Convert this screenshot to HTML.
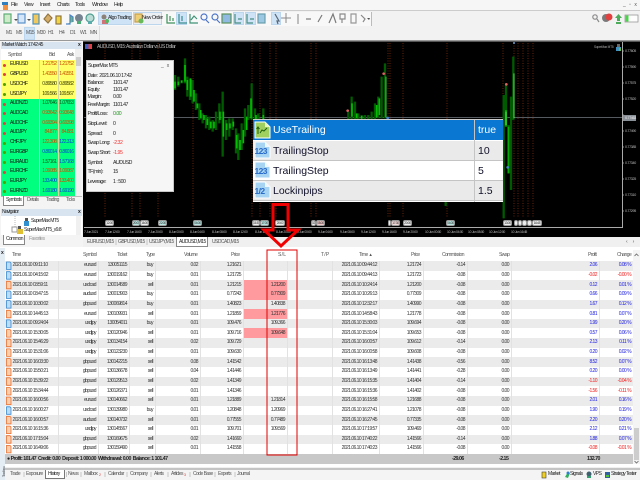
<!DOCTYPE html>
<html><head><meta charset="utf-8"><style>
html,body{margin:0;padding:0;width:640px;height:480px;overflow:hidden;background:#f0f0f0}
body{position:relative;font-family:"Liberation Sans",sans-serif;font-size:5px;color:#222;letter-spacing:-.55px}
.a{position:absolute}
.t{position:absolute;white-space:nowrap;line-height:7px;height:7px}
.s{font-size:5.2px;letter-spacing:-.5px}
.g{color:#555}
table{border-collapse:collapse;table-layout:fixed;position:absolute}
.b{color:#2020e0!important}.r{color:#f02020!important}
#mw td{height:9.73px;padding:0 1px 0 0;text-align:right;white-space:nowrap;font-size:5px;line-height:7px;box-sizing:border-box;border-right:1px solid #d8d8a0}
#mw td:first-child{text-align:left;padding-left:9px;color:#111}
.y td{background:#ffff66}.n td{background:#00ff7f}
.o{color:#c85000}.d{color:#3a3e00}.e{color:#005c18}.u{color:#0048d0}
.k{position:absolute;width:3px;height:3px;border-radius:50%;left:3px}
.ku{background:#e04040}.kd{background:#50a000}
.btn{position:absolute;background:#cfe3f6;border:1px solid #bcd6ee;box-sizing:border-box}
.pr{position:absolute;left:625px;font-size:3.6px;letter-spacing:-.3px;color:#bbb;line-height:5px;white-space:nowrap}
.tm{position:absolute;top:229px;font-size:3.4px;color:#bbb;line-height:6px;white-space:nowrap;letter-spacing:-.3px}
.lb{position:absolute;top:219.5px;height:6px;background:#eee;border:1px solid #999;border-radius:2px;box-sizing:border-box;font-size:3.2px;line-height:4px;color:#222;text-align:center;letter-spacing:-.3px;overflow:hidden}
.big{position:absolute;font-size:10.5px;line-height:20px;height:20px;color:#10102a;letter-spacing:0;white-space:nowrap}
.ic{position:absolute;left:254.5px;font-size:8.5px;font-weight:bold;color:#2a6cc8;letter-spacing:-.6px;line-height:10px;height:10px;white-space:nowrap}
#r{left:5px;top:261px;width:628px}
#r td{height:9.65px;padding:0 1.5px 0 0;text-align:right;white-space:nowrap;overflow:hidden;line-height:7px;font-size:5px;color:#333;border-right:1px solid #e2e2e2;box-sizing:border-box;background:#ebebeb}
#r tr:nth-child(even) td{background:#fff}
#r td.l{text-align:left;padding-left:7.5px}
#r td.p{background:#ff9a9e!important}
</style></head><body>

<!-- menu -->
<div class="a" style="left:0;top:0;width:640px;height:10px;background:#f6f6f6"></div>
<svg class="a" style="left:2px;top:1px" width="7" height="9"><rect x="0" y="1" width="6" height="3" fill="#3080c0"/><rect x="1" y="4" width="5" height="5" fill="#f09040"/></svg>
<span class="t s" style="left:11px;top:2px">File</span><span class="t s" style="left:24px;top:2px">View</span><span class="t s" style="left:40px;top:2px">Insert</span><span class="t s" style="left:57px;top:2px">Charts</span><span class="t s" style="left:75px;top:2px">Tools</span><span class="t s" style="left:92px;top:2px">Window</span><span class="t s" style="left:114px;top:2px">Help</span>
<span class="t g" style="left:623px;top:2px;letter-spacing:1px">_ ▫ x</span>

<!-- toolbar -->
<div class="a" style="left:0;top:10px;width:640px;height:1px;background:#ccc"></div>
<div class="a" style="left:0;top:11px;width:640px;height:15px;background:#f2f2f2"></div>
<div class="a" style="left:2px;top:12px;width:369px;height:14px;background:#f8f8f8;border-right:1px solid #bbb"></div>
<div class="btn" style="left:98px;top:12px;width:34px;height:13px"></div>
<div class="btn" style="left:133px;top:12px;width:29px;height:13px;background:#ecf0f4"></div>
<div class="btn" style="left:176px;top:12px;width:11px;height:13px"></div>
<div class="btn" style="left:233px;top:12px;width:11px;height:13px"></div>
<div class="btn" style="left:245px;top:12px;width:11px;height:13px"></div>
<div class="btn" style="left:271px;top:12px;width:10px;height:13px"></div>
<svg class="a" style="left:0;top:10px;opacity:.85" width="640" height="18" fill="none">
<g stroke-width="1.2">
<rect x="4" y="4" width="7" height="9" fill="#c8e8c0" stroke="#40a060"/><path d="M14 9l2 2 2-2z" fill="#333"/>
<rect x="18" y="4" width="7" height="9" fill="#d0e4f8" stroke="#4080c0"/><path d="M27 9l2 2 2-2z" fill="#333"/>
<rect x="33" y="4" width="6" height="10" fill="#f0c040" stroke="#3080b0"/>
<path d="M44 9l4-5 4 4-4 5z" fill="#d0a050" stroke="#806020"/>
<rect x="56" y="6" width="5" height="8" fill="#f0d020" stroke="#806020"/>
<path d="M66 14h4V5l3 2v5" fill="#50b050" stroke="#3070c0"/>
<circle cx="79" cy="8" r="4" fill="#607080"/><rect x="77" y="11" width="4" height="3" fill="#30a060"/>
<circle cx="90" cy="8" r="4" fill="#b0d8d0" stroke="#309080"/><rect x="88" y="11" width="4" height="3" fill="#40a0a0"/>
<circle cx="104" cy="7" r="2.5" fill="#807060"/><path d="M102 10h6v4h-6z" fill="#d06060"/><circle cx="107" cy="11" r="2" fill="#40b040"/>
<rect x="135" y="4" width="7" height="8" fill="#f0c860" stroke="#c09030"/><circle cx="141" cy="11" r="2.5" fill="#50b040"/>
<path d="M167 4v9h8M170 6v5M173 8v3" stroke="#208040"/><path d="M179 4v9h8M182 6v5" stroke="#208080"/><path d="M190 4v9h8M191 10l3-4 3 3" stroke="#208060"/>
<circle cx="204" cy="7" r="3" stroke="#3060c0"/><path d="M206 10l3 3" stroke="#3060c0"/><circle cx="215" cy="7" r="3" stroke="#3060c0"/><path d="M217 10l3 3" stroke="#3060c0"/>
<rect x="222" y="4" width="9" height="9" fill="#80b0e0" stroke="#408040"/>
<path d="M235 4v9h6M238 9h4" stroke="#308070"/><path d="M247 4v9h6M250 9h4" stroke="#308070"/>
<rect x="258" y="4" width="7" height="9" fill="#8cc0e0" stroke="#5090a0"/>
<path d="M275 4l4 7-2 0 1 3" stroke="#405060"/><path d="M286 3v10M281 8h10" stroke="#777" stroke-width="1"/>
<path d="M298 4v10" stroke="#888"/><path d="M306 9h5" stroke="#666"/><path d="M318 12l4-7" stroke="#666"/>
<path d="M329 13l4-9 3 9" stroke="#666"/><path d="M340 4h5v5h-5zM342 9v4" stroke="#777"/><path d="M351 4h5v9h-5z" stroke="#888"/><path d="M361 5l4 4-2 3" stroke="#777"/><path d="M367 8l2 2 1-2z" fill="#333"/>
<circle cx="595" cy="7" r="2.2" stroke="#777"/><path d="M597 9l2 3" stroke="#777"/>
<circle cx="606" cy="8" r="4" fill="#666"/><circle cx="609" cy="7" r="3.5" fill="#e02020"/>
<path d="M615 8l3.500-4 3.500 4h-2v3h-3v-3z" fill="#30a040"/><rect x="616" y="12" width="5" height="2" fill="#30a040"/>
<rect x="625" y="5" width="13" height="7" fill="#fff" stroke="#888" stroke-width=".8"/><rect x="625.500" y="5.500" width="3" height="6" fill="#30d030"/>
</g></svg>
<span class="t s" style="left:108px;top:15px;color:#222">Algo Trading</span>
<span class="t s" style="left:142px;top:15px;color:#222">New Order</span>

<div class="a" style="left:0;top:26px;width:640px;height:15px;background:#f2f2f2"></div>
<div class="a" style="left:99px;top:26px;width:1px;height:15px;background:#ddd"></div>
<div class="btn" style="left:24px;top:27px;width:11px;height:13px"></div>
<span class="t g" style="left:6px;top:30px">M1</span><span class="t g" style="left:16px;top:30px">M5</span><span class="t g" style="left:26px;top:30px">M15</span><span class="t g" style="left:37px;top:30px">M30</span><span class="t g" style="left:48px;top:30px">H1</span><span class="t g" style="left:59px;top:30px">H4</span><span class="t g" style="left:70px;top:30px">D1</span><span class="t g" style="left:80px;top:30px">W1</span><span class="t g" style="left:90px;top:30px">MN</span>
<div class="a" style="left:0;top:40px;width:640px;height:1px;background:#999"></div>

<!-- chart -->
<div class="a" style="left:83px;top:41px;width:557px;height:196px;background:#000;border-top:1px solid #555;box-sizing:border-box"></div>
<div class="a" style="left:85px;top:44px;width:7px;height:5px;background:linear-gradient(90deg,#4060c0 50%,#e04040 50%)"></div>
<span class="t" style="left:97px;top:44px;color:#bbb">AUDUSD, M15: Australian Dollar vs US Dollar</span>
<svg class="a" style="left:0;top:0" width="640" height="240" fill="none">
<g stroke="#6a2408" stroke-width="1" stroke-dasharray="1 1.500">
<path d="M105 43V218M132 43V218M140 43V218M158 43V218M193 43V218M252 43V218M260 43V218M270 43V218M276 43V218M311 43V218M316 43V218M388 43V218M390 43V218M403 43V218M447 43V218M503 43V218M514 43V218M518 43V218M523 43V218M528 43V218M533 43V218"/>
</g>
<path d="M84 117.500H622" stroke="#555a60" stroke-width="1"/>
<g transform="translate(170,40) scale(.33333)">
<path stroke="#005a00" stroke-width="7" d="M15 105V150M25 110V140M35 120V130M45 55V130M52 110V170M60 115V180M68 120V190M78 160V210M88 190V240M98 220V250M108 225V265M118 230V270M128 240V275M138 215V270M148 190V250M158 155V350M168 240V300M178 235V290M188 235V270M198 265V340M205 280V360M215 250V330M225 205V290M235 195V240M245 130V240M255 205V240M265 220V240M280 205V240M535 215V238M545 170V238M555 185V238M565 220V238M575 225V238M585 225V238M595 225V238M605 215V238M615 190V238M625 170V235M635 110V235M645 70V235"/>
<path stroke="#00c000" stroke-width="5" d="M15 125V145M25 125V135M35 122V128M45 75V125M52 120V150M62 115V170M72 150V185M82 190V205M92 210V235M102 225V240M112 235V255M122 245V265M132 245V265M150 215V240M160 215V290M170 250V270M180 250V265M190 245V260M200 285V325M210 300V330M220 270V310M230 230V270M243 175V235M258 225V238M280 225V238M546 190V230M560 220V235M575 228V236M620 195V232M628 175V225"/>
<path stroke="#55ee55" stroke-width="2.500" d="M648 110V232"/>
<circle cx="641" cy="101" r="4" fill="#e06060"/><circle cx="533" cy="212" r="4" fill="#e06060"/><circle cx="653" cy="234" r="4" fill="#4080d0"/>
</g>
<g transform="translate(400,40) scale(.33333)">
<path stroke="#005a00" stroke-width="7" d="M137 485V498M311 165V535M318 130V260M326 255V400M333 170V450M340 50V240"/>
<path stroke="#00b000" stroke-width="5" d="M318 210V260M325 260V400"/>
<path stroke="#55ee55" stroke-width="3" d="M342 100V235M318 215V255"/>
<circle cx="319" cy="133" r="4" fill="#e06060"/><circle cx="323" cy="382" r="4" fill="#4080d0"/><circle cx="342" cy="9" r="3" fill="#70a0d0"/>
</g>
<path d="M84 227.500H622.500V42" stroke="#aaa" stroke-width="1"/>
<path d="M622 51h2M622 67h2M622 83h2M622 99h2M622 115h2M622 131h2M622 147h2M622 163h2M622 179h2M622 195h2M622 211h2" stroke="#aaa" stroke-width=".7"/>
</svg>
<span class="t" style="left:594px;top:44px;color:#aaa;font-size:3.2px;letter-spacing:-.2px">SuperMax MT5</span>
<svg class="a" style="left:616px;top:44px" width="6" height="8"><rect x="1" y="0" width="3" height="3" fill="#666"/><rect x="0" y="3" width="5" height="4" fill="#4090c0"/><rect x="3" y="4" width="2" height="3" fill="#60c040"/></svg>
<span class="pr" style="top:48.500px">0.77605</span><span class="pr" style="top:64.500px">0.77590</span><span class="pr" style="top:80.500px">0.77575</span><span class="pr" style="top:96.500px">0.77520</span><span class="pr" style="top:128.500px">0.77490</span><span class="pr" style="top:144.500px">0.77385</span><span class="pr" style="top:160.500px">0.77340</span><span class="pr" style="top:176.500px">0.77325</span><span class="pr" style="top:192.500px">0.77310</span><span class="pr" style="top:208.500px">0.77295</span>
<div class="a" style="left:623px;top:114.500px;width:13px;height:6px;background:#8a9098;font-size:3.6px;letter-spacing:-.3px;line-height:6px;color:#eee;text-align:right">0.77463</div>

<span class="tm" style="left:84px">7 Jun 2021</span><span class="tm" style="left:105px">7 Jun 12:00</span><span class="tm" style="left:127px">7 Jun 16:00</span><span class="tm" style="left:148px">7 Jun 20:00</span><span class="tm" style="left:169px">8 Jun 00:00</span><span class="tm" style="left:190px">8 Jun 04:00</span><span class="tm" style="left:212px">8 Jun 08:00</span><span class="tm" style="left:233px">8 Jun 12:00</span><span class="tm" style="left:255px">8 Jun 16:00</span><span class="tm" style="left:276px">8 Jun 20:00</span><span class="tm" style="left:297px">9 Jun 00:00</span><span class="tm" style="left:318px">9 Jun 04:00</span><span class="tm" style="left:340px">9 Jun 08:00</span><span class="tm" style="left:361px">9 Jun 12:00</span><span class="tm" style="left:382px">9 Jun 16:00</span><span class="tm" style="left:403px">9 Jun 20:00</span><span class="tm" style="left:425px">10 Jun 00:00</span><span class="tm" style="left:447px">10 Jun 04:00</span><span class="tm" style="left:468px">10 Jun 08:00</span><span class="tm" style="left:489px">10 Jun 12:00</span><span class="tm" style="left:511px">10 Jun 16:45</span>

<div class="lb" style="left:105px;width:9px">12:00</div><div class="lb" style="left:132px;width:8px;background:#b8e4e0">20:00</div><div class="lb" style="left:140px;width:9px">16:00</div><div class="lb" style="left:158px;width:9px;background:#b8e4e0">22:00</div><div class="lb" style="left:193px;width:9px;background:#b8e4e0">04:00</div><div class="lb" style="left:252px;width:8px">15:30</div><div class="lb" style="left:260px;width:9px;background:#b8e4e0">17:00</div><div class="lb" style="left:275px;width:10px">20:00</div><div class="lb" style="left:311px;width:5px">02</div><div class="lb" style="left:316px;width:9px;background:#f0c8c8">08:00</div><div class="lb" style="left:388px;width:3px"></div><div class="lb" style="left:391px;width:9px;background:#f0d8d8">17:30</div><div class="lb" style="left:403px;width:9px">20:00</div><div class="lb" style="left:446px;width:9px;background:#b8e4e0">04:00</div><div class="lb" style="left:503px;width:9px">13:00</div><div class="lb" style="left:514px;width:4px"></div><div class="lb" style="left:518px;width:4px"></div><div class="lb" style="left:522px;width:5px"></div><div class="lb" style="left:527px;width:5px"></div><div class="lb" style="left:532px;width:10px">16:45</div>

<!-- supermax panel -->
<div class="a" style="left:86px;top:60px;width:88px;height:132px;background:#f6f6f6;border:1px solid #c8c8c8;box-sizing:border-box"></div>
<span class="t s" style="left:88px;top:63px">SuperMax MT5</span><span class="t g" style="left:161px;top:63px;letter-spacing:3px">_x</span>
<span class="t s" style="left:87.500px;top:72.500px">Date:&nbsp; 2021.06.10 17:42</span>
<span class="t s" style="left:87.500px;top:79.500px">Balance:</span><span class="t s" style="left:113px;top:79.500px">1101.47</span>
<span class="t s" style="left:87.500px;top:87px">Equity:</span><span class="t s" style="left:113px;top:87px">1101.47</span>
<span class="t s" style="left:87.500px;top:94px">Margin:</span><span class="t s" style="left:113px;top:94px">0.00</span>
<span class="t s" style="left:87.500px;top:101.500px">FreeMargin:</span><span class="t s" style="left:113px;top:101.500px">1101.47</span>
<span class="t s" style="left:87.500px;top:111px">Profit/Loss:</span><span class="t s" style="left:113px;top:111px;color:#209020">0.00</span>
<span class="t s" style="left:87.500px;top:120.500px">StopLevel:</span><span class="t s" style="left:113px;top:120.500px">0</span>
<span class="t s" style="left:87.500px;top:130.500px">Spread:</span><span class="t s" style="left:113px;top:130.500px">0</span>
<span class="t s" style="left:87.500px;top:140px">Swap Long:</span><span class="t s" style="left:113px;top:140px;color:#f03030">-2.32</span>
<span class="t s" style="left:87.500px;top:149.500px">Swap Short:</span><span class="t s" style="left:113px;top:149.500px;color:#f03030">-1.95</span>
<span class="t s" style="left:87.500px;top:159.500px">Symbol:</span><span class="t s" style="left:113px;top:159.500px">AUDUSD</span>
<span class="t s" style="left:87.500px;top:169px">TF(min):</span><span class="t s" style="left:113px;top:169px">15</span>
<span class="t s" style="left:87.500px;top:178.500px">Leverage:</span><span class="t s" style="left:113px;top:178.500px">1 : 500</span>

<!-- params table -->
<div class="a" style="left:253px;top:119px;width:250px;height:83px;background:#fff;border-top:1px solid #ccc;box-sizing:border-box"></div>
<div class="a" style="left:253px;top:120px;width:221px;height:20px;background:#0a78d2"></div>
<div class="a" style="left:475px;top:120px;width:28px;height:20px;background:#0a78d2"></div>
<div class="a" style="left:253px;top:141px;width:250px;height:19px;background:#eaeaea"></div>
<div class="a" style="left:253px;top:160px;width:250px;height:1px;background:#c4c4c4"></div>
<div class="a" style="left:253px;top:180px;width:250px;height:1px;background:#c4c4c4"></div>
<div class="a" style="left:253px;top:181px;width:250px;height:19px;background:#eaeaea"></div>
<div class="a" style="left:253px;top:200px;width:250px;height:1px;background:#c4c4c4"></div>
<div class="a" style="left:474px;top:120px;width:1px;height:82px;background:#c4c4c4"></div>
<svg class="a" style="left:254px;top:121px" width="17" height="18"><path d="M1 1H11L16 6V17H1Z" fill="#9fd060" stroke="#fff"/><path d="M11 1V6H16" fill="#e8f8c0"/><path d="M4 13V6M2.500 8L4 6 5.500 8M6 12L8 9 10 10 13 7" stroke="#206010" fill="none"/></svg>
<svg class="a" style="left:254px;top:141px" width="17" height="18"><path d="M1 1H11L16 6V17H1Z" fill="#a8d4f4" stroke="#fff"/><path d="M11 1V6H16" fill="#f0f8ff"/></svg>
<svg class="a" style="left:254px;top:161px" width="17" height="18"><path d="M1 1H11L16 6V17H1Z" fill="#a8d4f4" stroke="#fff"/><path d="M11 1V6H16" fill="#f0f8ff"/></svg>
<svg class="a" style="left:254px;top:181px" width="17" height="18"><path d="M1 1H11L16 6V17H1Z" fill="#a8d4f4" stroke="#fff"/><path d="M11 1V6H16" fill="#f0f8ff"/></svg>
<span class="ic" style="top:146px">123</span>
<span class="ic" style="top:166px">123</span>
<span class="ic" style="top:186px">1/2</span>
<span class="big" style="left:273px;top:120px;color:#fff">UseTrailing</span><span class="big" style="left:478px;top:120px;color:#fff">true</span>
<span class="big" style="left:273px;top:141px">TrailingStop</span><span class="big" style="left:478px;top:141px">10</span>
<span class="big" style="left:273px;top:161px">TrailingStep</span><span class="big" style="left:478px;top:161px">5</span>
<span class="big" style="left:273px;top:181px">Lockinpips</span><span class="big" style="left:478px;top:181px">1.5</span>

<!-- market watch -->
<div class="a" style="left:0;top:41px;width:83px;height:209px;background:#f4f4f4"></div>
<div class="a" style="left:1px;top:42px;width:81px;height:7px;background:#d8e4f0"></div>
<span class="t" style="left:2px;top:41.500px">Market Watch: 17:42:45</span>
<span class="t" style="left:78px;top:41.500px;font-weight:bold">x</span>
<div class="a" style="left:1px;top:49px;width:74px;height:11px;background:#fff"></div>
<span class="t g" style="left:8px;top:51.500px">Symbol</span><span class="t g" style="left:49px;top:51.500px">Bid</span><span class="t g" style="left:67px;top:51.500px">Ask</span>
<table id="mw" style="left:1px;top:60px;width:74px">
<colgroup><col style="width:38px"><col style="width:19px"><col style="width:17px"></colgroup>
<tr class="y"><td>EURUSD</td><td class="o">1.21752</td><td class="o">1.21752</td></tr>
<tr class="y"><td>GBPUSD</td><td class="o">1.41550</td><td class="o">1.41551</td></tr>
<tr class="y"><td>USDCHF</td><td class="d">0.89580</td><td class="d">0.89582</td></tr>
<tr class="y"><td>USDJPY</td><td class="d">109.566</td><td class="d">109.567</td></tr>
<tr class="n"><td>AUDNZD</td><td class="e">1.07646</td><td class="e">1.07653</td></tr>
<tr class="n"><td>AUDCAD</td><td class="o">0.93642</td><td class="o">0.93648</td></tr>
<tr class="n"><td>AUDCHF</td><td class="o">0.69394</td><td class="o">0.69398</td></tr>
<tr class="n"><td>AUDJPY</td><td class="o">84.877</td><td class="o">84.881</td></tr>
<tr class="n"><td>CHFJPY</td><td class="o">122.308</td><td class="u">122.313</td></tr>
<tr class="n"><td>EURGBP</td><td class="u">0.86014</td><td class="u">0.86016</td></tr>
<tr class="n"><td>EURAUD</td><td class="e">1.57161</td><td class="u">1.57168</td></tr>
<tr class="n"><td>EURCHF</td><td class="o">1.09085</td><td class="o">1.09087</td></tr>
<tr class="n"><td>EURJPY</td><td class="u">133.400</td><td class="o">133.400</td></tr>
<tr class="n"><td>EURNZD</td><td class="u">1.69180</td><td class="u">1.69190</td></tr>
</table>
<div class="k ku" style="top:63.500px"></div><div class="k ku" style="top:73px"></div><div class="k kd" style="top:83px"></div><div class="k kd" style="top:92.500px"></div><div class="k ku" style="top:102.500px"></div><div class="k ku" style="top:112px"></div><div class="k ku" style="top:122px"></div><div class="k ku" style="top:131.500px"></div><div class="k kd" style="top:141.500px"></div><div class="k kd" style="top:151px"></div><div class="k kd" style="top:161px"></div><div class="k ku" style="top:170.500px"></div><div class="k kd" style="top:180.500px"></div><div class="k kd" style="top:190px"></div>
<div class="a" style="left:75px;top:49px;width:6px;height:147px;background:#f0f0f0"></div>
<div class="a" style="left:76px;top:57px;width:4.500px;height:9px;background:#cdcdcd"></div>
<div class="a" style="left:1px;top:196px;width:81px;height:1px;background:#bbb"></div>
<div class="a" style="left:3px;top:196px;width:21px;height:10px;background:#fff;border:1px solid #888;border-top:none;box-sizing:border-box"></div>
<span class="t" style="left:6px;top:197px">Symbols</span><span class="t g" style="left:27px;top:197px">Details</span><span class="t g" style="left:46px;top:197px">Trading</span><span class="t g" style="left:66px;top:197px">Ticks</span>
<!-- navigator -->
<div class="a" style="left:1px;top:209px;width:81px;height:7px;background:#d8e4f0"></div>
<span class="t" style="left:2px;top:209px">Navigator</span><span class="t" style="left:78px;top:209px;font-weight:bold">x</span>
<div class="a" style="left:1px;top:216px;width:81px;height:19px;background:#fff"></div>
<svg class="a" style="left:10px;top:216px" width="24" height="19" fill="none"><path d="M5 0V14M5 14H8" stroke="#bbb" stroke-dasharray="1 1"/><rect x="2" y="11" width="5" height="5" fill="#fff" stroke="#999"/><rect x="15" y="2" width="3" height="3" fill="#555"/><rect x="14" y="5" width="5" height="5" fill="#3090d0"/><rect x="8" y="10" width="3" height="3" fill="#555"/><rect x="7" y="13" width="6" height="5" fill="#e0c030"/></svg>
<span class="t" style="left:31px;top:217.500px">SuperMax MT5</span><span class="t" style="left:24px;top:226.500px">SuperMax MT5_v9.8</span>
<div class="a" style="left:76px;top:216px;width:5px;height:19px;background:#f0f0f0"></div>
<div class="a" style="left:3px;top:235px;width:22px;height:10px;background:#fff;border:1px solid #888;border-top:none;box-sizing:border-box"></div>
<span class="t" style="left:6px;top:236px">Common</span><span class="t" style="left:29px;top:236px;color:#999">Favorites</span>

<!-- chart tabs -->
<div class="a" style="left:83px;top:237px;width:557px;height:10px;background:#f0f0f0"></div>
<div class="a" style="left:176px;top:237px;width:32px;height:10px;background:#fff;border:1px solid #888;border-top:none;box-sizing:border-box"></div>
<svg class="a" style="left:83px;top:238px" width="130" height="8"><path d="M33 1v6M64 1v6" stroke="#bbb" stroke-width=".8"/></svg>
<span class="t g" style="left:87px;top:239px">EURUSD,M15</span><span class="t g" style="left:118px;top:239px">GBPUSD,M15</span><span class="t g" style="left:149px;top:239px">USDJPY,M15</span><span class="t" style="left:179px;top:239px;color:#222">AUDUSD,M15</span><span class="t g" style="left:212px;top:239px">USDCAD,M15</span>
<span class="t g" style="left:626px;top:239px;letter-spacing:5px">‹›</span>

<!-- history -->
<div class="a" style="left:0;top:247px;width:640px;height:3px;background:#fff"></div>
<div class="a" style="left:0;top:248px;width:5px;height:232px;background:#e4ecf4"></div>
<span class="t" style="left:1px;top:250px;font-weight:bold">x</span>
<div class="a" style="left:5px;top:250px;width:628px;height:11px;background:#fff"></div>
<span class="t g" style="left:12px;top:252px">Time</span><span class="t g" style="left:83px;top:252px">Symbol</span><span class="t g" style="left:117px;top:252px">Ticket</span><span class="t g" style="left:146px;top:252px">Type</span><span class="t g" style="left:184px;top:252px">Volume</span><span class="t g" style="left:231px;top:252px">Price</span><span class="t g" style="left:278px;top:252px">S / L</span><span class="t g" style="left:321px;top:252px">T / P</span><span class="t g" style="left:359px;top:252px">Time &nbsp;▴</span><span class="t g" style="left:411px;top:252px">Price</span><span class="t g" style="left:442px;top:252px">Commission</span><span class="t g" style="left:499px;top:252px">Swap</span><span class="t g" style="left:588px;top:252px">Profit</span><span class="t g" style="left:617px;top:252px">Change</span>
<table id="r">
<colgroup><col style="width:53px"><col style="width:40px"><col style="width:31px"><col style="width:26px"><col style="width:45px"><col style="width:43px"><col style="width:44px"><col style="width:45px"><col style="width:47px"><col style="width:44px"><col style="width:44px"><col style="width:44px"><col style="width:88px"><col style="width:34px"></colgroup>
<tr><td class="l">2021.06.10 09:11:10</td><td>eurusd</td><td>130051115</td><td>buy</td><td>0.02</td><td>1.21621</td><td></td><td></td><td>2021.06.10 09:44:12</td><td>1.21724</td><td>-0.14</td><td>0.00</td><td class="b">2.06</td><td class="b">0.08 %</td></tr>
<tr><td class="l">2021.06.10 04:15:02</td><td>eurusd</td><td>130019162</td><td>buy</td><td>0.01</td><td>1.21725</td><td></td><td></td><td>2021.06.10 09:44:13</td><td>1.21723</td><td>-0.08</td><td>0.00</td><td class="r">-0.02</td><td class="r">-0.00 %</td></tr>
<tr><td class="l">2021.06.10 03:59:11</td><td>usdcad</td><td>130014589</td><td>sell</td><td>0.01</td><td>1.21215</td><td class="p">1.21200</td><td></td><td>2021.06.10 10:24:14</td><td>1.21200</td><td>-0.08</td><td>0.00</td><td class="b">0.12</td><td class="b">0.01 %</td></tr>
<tr><td class="l">2021.06.10 03:47:15</td><td>audusd</td><td>130013903</td><td>buy</td><td>0.01</td><td>0.77243</td><td class="p">0.77309</td><td></td><td>2021.06.10 10:26:13</td><td>0.77309</td><td>-0.08</td><td>0.00</td><td class="b">0.66</td><td class="b">0.09 %</td></tr>
<tr><td class="l">2021.06.10 10:30:02</td><td>gbpusd</td><td>130069814</td><td>buy</td><td>0.01</td><td>1.40823</td><td>1.40838</td><td></td><td>2021.06.10 12:32:17</td><td>1.40990</td><td>-0.08</td><td>0.00</td><td class="b">1.67</td><td class="b">0.12 %</td></tr>
<tr><td class="l">2021.06.10 14:45:13</td><td>eurusd</td><td>130109931</td><td>sell</td><td>0.01</td><td>1.21859</td><td class="p">1.21776</td><td></td><td>2021.06.10 14:58:43</td><td>1.21778</td><td>-0.08</td><td>0.00</td><td class="b">0.81</td><td class="b">0.07 %</td></tr>
<tr><td class="l">2021.06.10 09:24:04</td><td>usdjpy</td><td>130054011</td><td>buy</td><td>0.01</td><td>109.476</td><td>109.366</td><td></td><td>2021.06.10 15:30:03</td><td>109.694</td><td>-0.08</td><td>0.00</td><td class="b">1.99</td><td class="b">0.20 %</td></tr>
<tr><td class="l">2021.06.10 15:30:05</td><td>usdjpy</td><td>130120946</td><td>sell</td><td>0.01</td><td>109.716</td><td class="p">109.648</td><td></td><td>2021.06.10 15:31:04</td><td>109.653</td><td>-0.08</td><td>0.00</td><td class="b">0.57</td><td class="b">0.06 %</td></tr>
<tr><td class="l">2021.06.10 15:46:29</td><td>usdjpy</td><td>130134154</td><td>sell</td><td>0.02</td><td>109.729</td><td></td><td></td><td>2021.06.10 16:00:57</td><td>109.612</td><td>-0.14</td><td>0.00</td><td class="b">2.13</td><td class="b">0.11 %</td></tr>
<tr><td class="l">2021.06.10 15:31:06</td><td>usdjpy</td><td>130123230</td><td>sell</td><td>0.01</td><td>109.630</td><td></td><td></td><td>2021.06.10 16:00:58</td><td>109.608</td><td>-0.08</td><td>0.00</td><td class="b">0.20</td><td class="b">0.02 %</td></tr>
<tr><td class="l">2021.06.10 16:03:30</td><td>gbpusd</td><td>130142215</td><td>sell</td><td>0.08</td><td>1.41542</td><td></td><td></td><td>2021.06.10 16:13:48</td><td>1.41438</td><td>-0.56</td><td>0.00</td><td class="b">8.52</td><td class="b">0.07 %</td></tr>
<tr><td class="l">2021.06.10 15:50:21</td><td>gbpusd</td><td>130136678</td><td>sell</td><td>0.04</td><td>1.41446</td><td></td><td></td><td>2021.06.10 16:13:49</td><td>1.41441</td><td>-0.28</td><td>0.00</td><td class="b">0.20</td><td class="b">0.00 %</td></tr>
<tr><td class="l">2021.06.10 15:39:22</td><td>gbpusd</td><td>130129513</td><td>sell</td><td>0.02</td><td>1.41349</td><td></td><td></td><td>2021.06.10 16:15:35</td><td>1.41404</td><td>-0.14</td><td>0.00</td><td class="r">-1.10</td><td class="r">-0.04 %</td></tr>
<tr><td class="l">2021.06.10 15:34:44</td><td>gbpusd</td><td>130126371</td><td>sell</td><td>0.01</td><td>1.41346</td><td></td><td></td><td>2021.06.10 16:15:36</td><td>1.41402</td><td>-0.08</td><td>0.00</td><td class="r">-1.56</td><td class="r">-0.11 %</td></tr>
<tr><td class="l">2021.06.10 16:00:56</td><td>eurusd</td><td>130140662</td><td>sell</td><td>0.01</td><td>1.21889</td><td>1.21814</td><td></td><td>2021.06.10 16:15:58</td><td>1.21688</td><td>-0.08</td><td>0.00</td><td class="b">2.01</td><td class="b">0.16 %</td></tr>
<tr><td class="l">2021.06.10 16:00:27</td><td>usdcad</td><td>130139980</td><td>buy</td><td>0.01</td><td>1.20848</td><td>1.20969</td><td></td><td>2021.06.10 16:27:41</td><td>1.21078</td><td>-0.08</td><td>0.00</td><td class="b">1.90</td><td class="b">0.19 %</td></tr>
<tr><td class="l">2021.06.10 16:00:57</td><td>audusd</td><td>130140732</td><td>sell</td><td>0.01</td><td>0.77555</td><td>0.77489</td><td></td><td>2021.06.10 16:27:45</td><td>0.77335</td><td>-0.08</td><td>0.00</td><td class="b">2.20</td><td class="b">0.20 %</td></tr>
<tr><td class="l">2021.06.10 16:15:36</td><td>usdjpy</td><td>130145567</td><td>sell</td><td>0.01</td><td>109.701</td><td>109.569</td><td></td><td>2021.06.10 17:19:57</td><td>109.469</td><td>-0.08</td><td>0.00</td><td class="b">2.12</td><td class="b">0.21 %</td></tr>
<tr><td class="l">2021.06.10 17:15:04</td><td>gbpusd</td><td>130169675</td><td>sell</td><td>0.02</td><td>1.41660</td><td></td><td></td><td>2021.06.10 17:40:22</td><td>1.41566</td><td>-0.14</td><td>0.00</td><td class="b">1.88</td><td class="b">0.07 %</td></tr>
<tr><td class="l">2021.06.10 16:49:06</td><td>gbpusd</td><td>130159490</td><td>sell</td><td>0.01</td><td>1.41558</td><td></td><td></td><td>2021.06.10 17:40:23</td><td>1.41566</td><td>-0.08</td><td>0.00</td><td class="r">-0.08</td><td class="r">-0.01 %</td></tr>
</table>
<svg class="a" style="left:6px;top:261px" width="6" height="194">
<g stroke-width=".8">
<path d="M.5 1H4L5 2V8.500H.5Z" fill="#bcdcf4" stroke="#3888d0"/>
<path d="M.5 10.700H4L5 11.700V18.200H.5Z" fill="#bcdcf4" stroke="#3888d0"/>
<path d="M.5 20.300H4L5 21.300V27.800H.5Z" fill="#fbd0b0" stroke="#e87030"/>
<path d="M.5 30H4L5 31V37.500H.5Z" fill="#bcdcf4" stroke="#3888d0"/>
<path d="M.5 39.600H4L5 40.600V47.100H.5Z" fill="#bcdcf4" stroke="#3888d0"/>
<path d="M.5 49.300H4L5 50.300V56.800H.5Z" fill="#fbd0b0" stroke="#e87030"/>
<path d="M.5 58.900H4L5 59.900V66.400H.5Z" fill="#bcdcf4" stroke="#3888d0"/>
<path d="M.5 68.600H4L5 69.600V76.100H.5Z" fill="#fbd0b0" stroke="#e87030"/>
<path d="M.5 78.200H4L5 79.200V85.700H.5Z" fill="#fbd0b0" stroke="#e87030"/>
<path d="M.5 87.900H4L5 88.900V95.400H.5Z" fill="#fbd0b0" stroke="#e87030"/>
<path d="M.5 97.500H4L5 98.500V105H.5Z" fill="#fbd0b0" stroke="#e87030"/>
<path d="M.5 107.200H4L5 108.200V114.700H.5Z" fill="#fbd0b0" stroke="#e87030"/>
<path d="M.5 116.800H4L5 117.800V124.300H.5Z" fill="#fbd0b0" stroke="#e87030"/>
<path d="M.5 126.500H4L5 127.500V134H.5Z" fill="#fbd0b0" stroke="#e87030"/>
<path d="M.5 136.100H4L5 137.100V143.600H.5Z" fill="#fbd0b0" stroke="#e87030"/>
<path d="M.5 145.800H4L5 146.800V153.300H.5Z" fill="#bcdcf4" stroke="#3888d0"/>
<path d="M.5 155.400H4L5 156.400V162.900H.5Z" fill="#fbd0b0" stroke="#e87030"/>
<path d="M.5 165.100H4L5 166.100V172.600H.5Z" fill="#fbd0b0" stroke="#e87030"/>
<path d="M.5 174.700H4L5 175.700V182.200H.5Z" fill="#fbd0b0" stroke="#e87030"/>
<path d="M.5 184.400H4L5 185.400V191.900H.5Z" fill="#fbd0b0" stroke="#e87030"/>
</g></svg>

<!-- total -->
<div class="a" style="left:5px;top:454px;width:628px;height:10px;background:#c8c8c8"></div>
<span class="t s" style="left:7px;top:455.500px;font-weight:bold;color:#222">● Profit: 101.47&nbsp; Credit: 0.00&nbsp; Deposit: 1 000.00&nbsp; Withdrawal: 0.00&nbsp; Balance: 1 101.47</span>
<span class="t s" style="left:452px;top:455.500px;font-weight:bold;color:#222">-29.06</span><span class="t s" style="left:499px;top:455.500px;font-weight:bold;color:#222">-2.15</span><span class="t s" style="left:587px;top:455.500px;font-weight:bold;color:#222">132.70</span>
<!-- scrollbar -->
<div class="a" style="left:633px;top:250px;width:7px;height:214px;background:#f4f4f4"></div>
<div class="a" style="left:634px;top:428px;width:5px;height:32px;background:#cdcdcd"></div>
<svg class="a" style="left:634px;top:253px" width="5" height="212"><path d="M.5 3L2.500 1 4.500 3M.5 208L2.500 210 4.500 208" fill="none" stroke="#666" stroke-width=".8"/></svg>
<!-- bottom -->
<div class="a" style="left:5px;top:464px;width:635px;height:3px;background:#fff"></div>
<div class="a" style="left:5px;top:468px;width:635px;height:2px;background:#c4c4c4"></div>
<div class="a" style="left:5px;top:470px;width:635px;height:10px;background:#f4f4f4"></div>
<div class="a" style="left:45px;top:470px;width:20px;height:8.500px;background:#fff;border:1px solid #777;border-top:none;box-sizing:border-box"></div>
<svg class="a" style="left:0;top:471px" width="240" height="7"><path d="M24 1v5M66.500 1v5M81 1v5M105 1v5M127 1v5M151 1v5M168 1v5M190 1v5M215 1v5M235 1v5" stroke="#bbb" stroke-width=".8"/></svg>
<span class="t" style="font-size:3.500px;letter-spacing:-.2px;transform:rotate(-90deg);transform-origin:left top;top:477px;left:.500px;color:#333">Toolbox</span>
<span class="t g" style="left:10px;top:470.500px">Trade</span><span class="t g" style="left:26px;top:470.500px">Exposure</span><span class="t" style="left:48px;top:470.500px;color:#222">History</span><span class="t g" style="left:68px;top:470.500px">News</span><span class="t g" style="left:84px;top:470.500px">Mailbox</span><span class="t" style="left:99px;top:472px;color:#e03030;font-size:3.500px">2</span><span class="t g" style="left:108px;top:470.500px">Calendar</span><span class="t g" style="left:130px;top:470.500px">Company</span><span class="t g" style="left:154px;top:470.500px">Alerts</span><span class="t g" style="left:171px;top:470.500px">Articles</span><span class="t" style="left:184px;top:472px;color:#e03030;font-size:3.500px">3</span><span class="t g" style="left:193px;top:470.500px">Code Base</span><span class="t g" style="left:218px;top:470.500px">Experts</span><span class="t g" style="left:237px;top:470.500px">Journal</span>
<svg class="a" style="left:540px;top:470px" width="100" height="10"><rect x="2" y="2" width="4" height="6" fill="#f0d020" stroke="#404040" stroke-width=".6"/><path d="M25 7l3-5 2 1-2 5z" fill="#30b060"/><circle cx="28" cy="3" r="1.500" fill="#3080d0"/><circle cx="49" cy="4" r="2.500" fill="#406070"/><rect x="47" y="6" width="4" height="2" fill="#30a070"/><rect x="65" y="2" width="5" height="6" fill="#3060a0"/><rect x="66" y="5" width="3" height="2" fill="#50c040"/></svg>
<span class="t" style="left:548px;top:471px;color:#222">Market</span><span class="t" style="left:570px;top:471px;color:#222">Signals</span><span class="t" style="left:593px;top:471px;color:#222">VPS</span><span class="t" style="left:611px;top:471px;color:#222">Strategy Tester</span>

<!-- red overlay -->
<svg class="a" style="left:0;top:0" width="640" height="480" fill="none">
<path d="M273 204.500H288V230H298L281 246 264 230H273Z" stroke="#f00000" stroke-width="3" stroke-linejoin="miter"/>
<rect x="267" y="250" width="30" height="205" stroke="#e00000" stroke-width="1"/>
</svg>
</body></html>
